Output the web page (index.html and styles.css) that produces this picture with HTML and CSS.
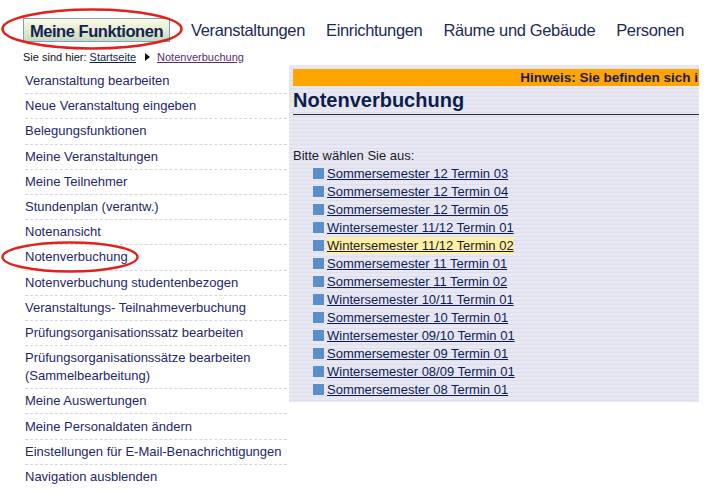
FILE: index.html
```html
<!DOCTYPE html>
<html lang="de">
<head>
<meta charset="utf-8">
<title>Notenverbuchung</title>
<link rel="stylesheet" href="styles.css">
</head>
<body>
<div class="page">
  <nav class="topnav">
    <a class="tab active">Meine Funktionen</a>
    <a class="tab">Veranstaltungen</a>
    <a class="tab">Einrichtungen</a>
    <a class="tab">Räume und Gebäude</a>
    <a class="tab">Personen</a>
  </nav>
  <div class="crumb">
    <span>Sie sind hier:</span>
    <a class="crumb-link">Startseite</a>
    <span class="crumb-arrow"></span>
    <a class="crumb-current">Notenverbuchung</a>
  </div>
  <div class="layout">
    <ul class="sidebar">
      <li><a>Veranstaltung bearbeiten</a></li>
      <li><a>Neue Veranstaltung eingeben</a></li>
      <li><a>Belegungsfunktionen</a></li>
      <li><a>Meine Veranstaltungen</a></li>
      <li><a>Meine Teilnehmer</a></li>
      <li><a>Stundenplan (verantw.)</a></li>
      <li><a>Notenansicht</a></li>
      <li><a>Notenverbuchung</a></li>
      <li><a>Notenverbuchung studentenbezogen</a></li>
      <li><a>Veranstaltungs- Teilnahmeverbuchung</a></li>
      <li><a>Prüfungsorganisationssatz bearbeiten</a></li>
      <li><a>Prüfungsorganisationssätze bearbeiten<br>(Sammelbearbeitung)</a></li>
      <li><a>Meine Auswertungen</a></li>
      <li><a>Meine Personaldaten ändern</a></li>
      <li><a>Einstellungen für E-Mail-Benachrichtigungen</a></li>
      <li class="last"><a>Navigation ausblenden</a></li>
    </ul>
    <main class="panel">
      <div class="notice"><span>Hinweis: Sie befinden sich i</span></div>
      <h1 class="title">Notenverbuchung</h1>
      <p class="prompt">Bitte wählen Sie aus:</p>
      <ul class="terms">
        <li><a>Sommersemester 12 Termin 03</a></li>
        <li><a>Sommersemester 12 Termin 04</a></li>
        <li><a>Sommersemester 12 Termin 05</a></li>
        <li><a>Wintersemester 11/12 Termin 01</a></li>
        <li><a class="hl">Wintersemester 11/12 Termin 02</a></li>
        <li><a>Sommersemester 11 Termin 01</a></li>
        <li><a>Sommersemester 11 Termin 02</a></li>
        <li><a>Wintersemester 10/11 Termin 01</a></li>
        <li><a>Sommersemester 10 Termin 01</a></li>
        <li><a>Wintersemester 09/10 Termin 01</a></li>
        <li><a>Sommersemester 09 Termin 01</a></li>
        <li><a>Wintersemester 08/09 Termin 01</a></li>
        <li><a>Sommersemester 08 Termin 01</a></li>
      </ul>
    </main>
  </div>
</div>
<svg class="mark mark-top" width="184" height="44" viewBox="0 0 184 44"><ellipse cx="92" cy="22" rx="89.5" ry="19.5" fill="none" stroke="#e3211c" stroke-width="2.6"/></svg>
<svg class="mark mark-side" width="140" height="34" viewBox="0 0 140 34"><ellipse cx="70" cy="17" rx="67.5" ry="14.5" fill="none" stroke="#e3211c" stroke-width="2.4"/></svg>
</body>
</html>
```
FILE: styles.css
```css
* { box-sizing: border-box; }
html, body { margin: 0; padding: 0; background: #fff; }
body {
  width: 714px;
  height: 498px;
  overflow: hidden;
  font-family: "Liberation Sans", Arial, Helvetica, sans-serif;
  position: relative;
}
a { cursor: pointer; }

.topnav {
  display: flex;
  align-items: center;
  padding: 18px 0 0 23px;
  gap: 21px;
  height: 42px;
}
.tab {
  font-size: 16.5px;
  letter-spacing: -0.35px;
  color: #1b2a58;
  line-height: 20px;
  white-space: nowrap;
}
.tab.active {
  font-weight: bold;
  font-size: 16.5px;
  letter-spacing: -0.45px;
  color: #14234f;
  height: 24px;
  width: 147px;
  padding: 2px 0 0 0;
  text-align: center;
  border: 1px solid #7d9fc4;
  background: linear-gradient(to bottom, #fbfbe3 0%, #e6edd3 50%, #c6d9c1 100%);
}

.crumb {
  margin: 6px 0 0 23px;
  font-size: 11px;
  line-height: 14px;
  height: 17px;
  color: #111;
  display: flex;
  align-items: center;
}
.crumb-link {
  margin-left: 3px;
  color: #0f1f4f;
  text-decoration: underline;
}
.crumb-arrow {
  width: 0; height: 0;
  margin: 0 7px 0 9px;
  border-top: 4px solid transparent;
  border-bottom: 4px solid transparent;
  border-left: 5px solid #111;
}
.crumb-current {
  color: #5a2d73;
  text-decoration: underline;
}

.layout {
  display: flex;
  align-items: flex-start;
}

.sidebar {
  list-style: none;
  margin: 4px 2px 0 0;
  padding: 0 0 0 25px;
  width: 287px;
  flex: none;
}
.sidebar li {
  border-bottom: 1px dashed #d6d6dc;
  padding: 3.1px 0 3.1px 0;
  font-size: 13px;
  line-height: 18px;
  color: #1e2869;
}
.sidebar li.last { border-bottom: none; }

.panel {
  width: 410px;
  flex: none;
  padding: 4px 0 4px 4px;
  overflow: hidden;
  background: repeating-linear-gradient(to bottom, #e8e8f2 0px, #e8e8f2 3px, #dedeee 3px, #dedeee 4px);
}
.notice {
  background: #ffa500;
  height: 17px;
  line-height: 17px;
  font-size: 13.5px;
  font-weight: bold;
  color: #1d1a55;
  white-space: nowrap;
  overflow: hidden;
  text-align: right;
  padding-right: 1px;
}
.title {
  margin: 2px 0 0 0;
  font-size: 20px;
  line-height: 24px;
  color: #0e1e4c;
  font-weight: bold;
  padding-bottom: 2px;
  border-bottom: 1px solid #2b2b3a;
}
.prompt {
  margin: 33px 0 0 0;
  font-size: 13px;
  line-height: 16px;
  color: #1a1a2a;
}
.terms {
  list-style: none;
  margin: 0;
  padding: 0 0 0 20px;
}
.terms li {
  display: flex;
  align-items: center;
  height: 18px;
  font-size: 13px;
}
.terms li::before {
  content: "";
  width: 11px;
  height: 11px;
  background: #5b8fc9;
  margin-right: 3px;
  flex: none;
}
.terms a {
  color: #0f1d55;
  text-decoration: underline;
  line-height: 17px;
}
.terms a.hl {
  background: #fff0a6;
  color: #1a1a1a;
}

.mark { position: absolute; pointer-events: none; }
.mark-top { left: 0; top: 7px; }
.mark-side { left: 0; top: 240px; }
```
